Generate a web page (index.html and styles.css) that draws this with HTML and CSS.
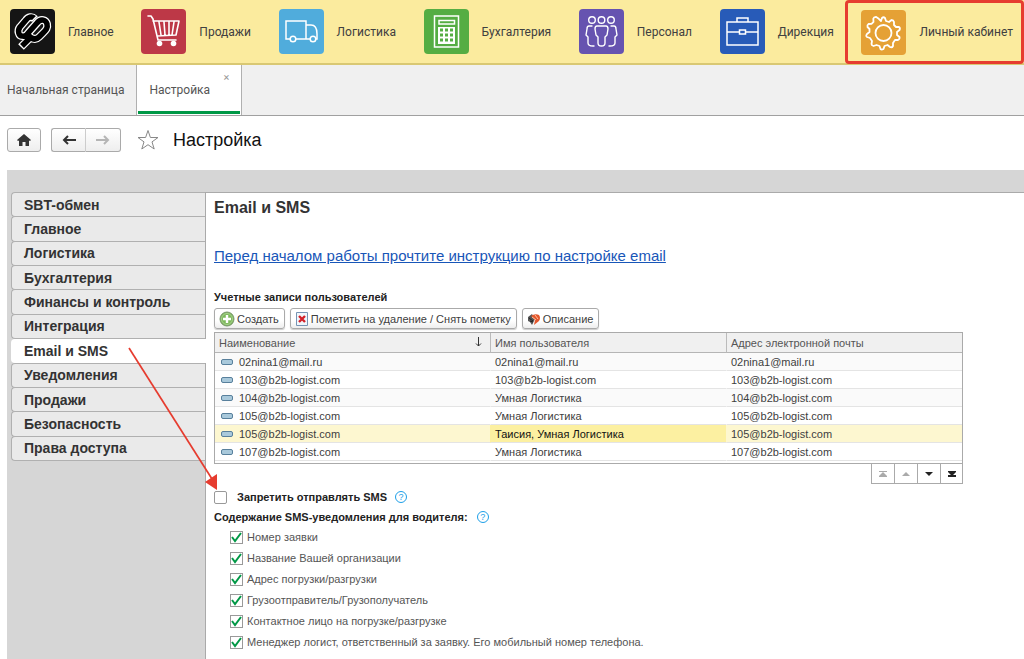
FILE: index.html
```html
<!DOCTYPE html>
<html lang="ru">
<head>
<meta charset="utf-8">
<title>Настройка</title>
<link rel="stylesheet" href="styles.css">
</head>
<body>
<nav class="sections" aria-label="Разделы">
  <a class="section" href="#main"><svg class="tile black" viewBox="0 0 45 45"><g fill="none" stroke-linejoin="round"><path stroke="#fff" stroke-width="8" d="M25 10C22 7 18 8 16 11L10 18C7 22 9 27 12 27C15 28 17 26 19 23L27 14C31 9 36 11 37 15C38 19 36 21 33 24L29 28C25 32 21 29 19 27M22 27L11 38"/><path stroke="#000" stroke-width="5.500" d="M24 9C22 7 18 8 16 11L10 18C7 22 9 27 12 27C15 28 17 26 19 23L27 14C31 9 36 11 37 15C38 19 36 21 33 24L29 28C25 32 21 29 19 27M22 27L12 37"/></g></svg>Главное</a>
  <a class="section" href="#sales"><svg class="tile red" viewBox="0 0 45 45"><g fill="none" stroke="#fff" stroke-width="1.600" stroke-linecap="round" stroke-linejoin="round"><path d="M7 7h3l2 3 5 21h18M12 12h26l-3 14-19 1M18 13l2 13M23 13l1 13M28 13v13M33 13l-2 13"/></g><g fill="#fff"><circle cx="18.500" cy="34.500" r="2.800"/><circle cx="32.500" cy="34.500" r="2.800"/></g></svg>Продажи</a>
  <a class="section" href="#logistics"><svg class="tile sky" viewBox="0 0 45 45"><g fill="none" stroke="#fff" stroke-width="1.500"><path d="M11 30H7V12h20v18H17M27 16h5c5 0 6 4 6 9v5h-1M31 30H17"/><circle cx="14" cy="30" r="2.800"/><circle cx="34" cy="30" r="2.800"/></g></svg>Логистика</a>
  <a class="section" href="#accounting"><svg class="tile green" viewBox="0 0 45 45"><path fill="none" stroke="#fff" stroke-width="1.500" d="M10.500 7h24v31h-24zM15 11.500h15.500v3.500H15z"/><path fill="#fff" d="M14 18h17v17H14z"/><path stroke="#55ad43" stroke-width="3" stroke-dasharray="3 2" d="M16 21h14M16 26h14M16 31h14"/></svg>Бухгалтерия</a>
  <a class="section" href="#staff"><svg class="tile violet" viewBox="0 0 45 45"><g fill="none" stroke="#fff" stroke-width="1.400" stroke-linejoin="round" stroke-linecap="round"><circle cx="13" cy="11" r="3.300"/><circle cx="22.500" cy="11" r="3.300"/><circle cx="32" cy="11" r="3.300"/><path d="M18 17h9q2 0 2 3l-1 6-2 2v6q0 3-3.500 3T19 34v-6l-2-2-1-6q0-3 2-3ZM13 17h-3q-2 0-2 3l-1 6 2 2v6q0 3 5 3h1M32 17h3q2 0 2 3l1 6-2 2v6q0 3-5 3h-1"/></g></svg>Персонал</a>
  <a class="section" href="#management"><svg class="tile blue" viewBox="0 0 45 45"><path fill="none" stroke="#fff" stroke-width="1.500" d="M7 13h31v23H7zM17 13V9h11v4M7 23h12M26 23h12M19.500 21h6v4h-6z"/></svg>Дирекция</a>
  <a class="section account" href="#account"><svg class="tile orange" viewBox="0 0 45 45"><g fill="none" stroke="#fff" stroke-width="1.800" stroke-linejoin="round"><circle cx="22.500" cy="23" r="8"/><path d="M20 11l1-3q1.500-1.500 3 0l1 3 3 1 2.500-2q2 0 2.500 2v3l2 2h3q1.500 1 .5 3l-2.500 2v3l2.500 2q.5 2-1.500 3h-3l-2 3v3q-1 2-3 1l-2.500-2-3 1-1 3q-2 1-3 0l-1-3-3-1-3 1q-2-.5-2-2l.5-3-2-3-3-1q-1.500-1 0-3l2.500-2v-3l-2-2q-.5-2 1-3l3-.2 2-2-.2-3q.5-2 2.500-2l3 2Z"/></g></svg>Личный кабинет</a>
</nav>
<div class="tabs">
  <a class="tab" href="#home">Начальная страница</a>
  <div class="tab current"><a href="#settings">Настройка</a><button class="close" aria-label="Закрыть">×</button></div>
</div>
<header class="toolbar">
  <button class="tool" aria-label="Домой"><svg width="14" height="12" viewBox="0 0 14 12"><path fill="#333" d="M7 0l7 6-1 1-1-.6V12H8.500V8h-3v4H2V6.400L1 7 0 6Z"/></svg></button>
  <div class="pair"><button class="tool" aria-label="Назад"><svg width="14" height="10" viewBox="0 0 14 10"><path fill="none" stroke="#333" stroke-width="2" d="M14 5H2M6 1L2 5l4 4"/></svg></button><button class="tool" aria-label="Вперед"><svg width="14" height="10" viewBox="0 0 14 10"><path fill="none" stroke="#b5b5b5" stroke-width="2" d="M0 5h12M8 1l4 4-4 4"/></svg></button></div>
  <button class="star" aria-label="В избранное"><svg width="22" height="22" viewBox="0 0 22 22"><path fill="#fff" stroke="#888" d="M11 1.500l2.400 7H21l-6 4.400 2.200 7.100L11 15.700 4.800 20 7 12.900 1 8.500h7.600Z"/></svg></button>
  <h1>Настройка</h1>
</header>
<div class="workspace">
  <nav class="side" aria-label="Настройки">
    <div class="side-list"><a href="#s1">SBT-обмен</a><a href="#s2">Главное</a><a href="#s3">Логистика</a><a href="#s4">Бухгалтерия</a><a href="#s5">Финансы и контроль</a><a href="#s6">Интеграция</a><a class="active" href="#s7">Email и SMS</a><a href="#s8">Уведомления</a><a href="#s9">Продажи</a><a href="#s10">Безопасность</a><a href="#s11">Права доступа</a></div>
  </nav>
  <main class="panel">
    <h2>Email и SMS</h2>
    <a class="guide" href="#guide">Перед началом работы прочтите инструкцию по настройке email</a>
    <h3>Учетные записи пользователей</h3>
    <div class="commands">
      <button><svg width="16" height="16" viewBox="0 0 16 16"><circle cx="8" cy="8" r="7" fill="#7db85c" stroke="#79966c"/><circle cx="8" cy="8" r="5.500" fill="none" stroke="#a8d28e"/><path stroke="#fff" stroke-width="2.400" d="M8 4v8M4 8h8"/></svg>Создать</button>
      <button><svg width="14" height="16" viewBox="0 0 14 16"><path fill="#f1f7fc" stroke="#7694b4" d="M1.500 1.500h11v13h-11z"/><path stroke="#d3222a" stroke-width="2.400" d="M4 5l6 6M10 5l-6 6"/></svg>Пометить на удаление / Снять пометку</button>
      <button><svg width="14" height="14" viewBox="0 0 14 14"><path fill="#555" d="M1 5l4-3 3 5-3 6-2-3-2-1Z"/><path fill="#e3562c" d="M4 4q4-3 8-1 2 3 0 6l-5 4 1-5Z"/><path stroke="#ffc29f" d="M5 5l4 3M8 3l3 4"/><path stroke="#222" d="M2 6l4 3M3 9l3 1"/></svg>Описание</button>
    </div>
    <table>
      <thead><tr><th class="name"><span>Наименование</span><svg width="7" height="10" viewBox="0 0 7 10"><path fill="none" stroke="#333" d="M3.500 0v9M1 6.500L3.500 9 6 6.500"/></svg></th><th>Имя пользователя</th><th>Адрес электронной почты</th></tr></thead>
      <tbody>
        <tr><td>02nina1@mail.ru</td><td>02nina1@mail.ru</td><td>02nina1@mail.ru</td></tr>
        <tr><td>103@b2b-logist.com</td><td>103@b2b-logist.com</td><td>103@b2b-logist.com</td></tr>
        <tr><td>104@b2b-logist.com</td><td>Умная Логистика</td><td>104@b2b-logist.com</td></tr>
        <tr><td>105@b2b-logist.com</td><td>Умная Логистика</td><td>105@b2b-logist.com</td></tr>
        <tr class="selected"><td>105@b2b-logist.com</td><td>Таисия, Умная Логистика</td><td>105@b2b-logist.com</td></tr>
        <tr><td>107@b2b-logist.com</td><td>Умная Логистика</td><td>107@b2b-logist.com</td></tr>
      </tbody>
    </table>
    <div class="pager">
      <button aria-label="В начало"><svg width="10" height="8" viewBox="0 0 10 8"><path fill="#aaa" d="M1 1h8v1H1zM5 2l4 4H1zM1 6h8v1H1z"/></svg></button><button aria-label="Вверх"><svg width="10" height="8" viewBox="0 0 10 8"><path fill="#aaa" d="M5 2l4 4H1z"/></svg></button><button aria-label="Вниз"><svg width="10" height="8" viewBox="0 0 10 8"><path fill="#222" d="M1 2h8L5 6z"/></svg></button><button aria-label="В конец"><svg width="10" height="8" viewBox="0 0 10 8"><path fill="#222" d="M1 1h8v1L6 5h3v2H1V5h3L1 2z"/></svg></button>
    </div>
    <div class="deny"><label><input type="checkbox">Запретить отправлять SMS</label><button class="help" aria-label="Справка">?</button></div>
    <div class="caption"><h3>Содержание SMS-уведомления для водителя:</h3><button class="help" aria-label="Справка">?</button></div>
    <div class="options">
      <label><input type="checkbox" checked>Номер заявки</label>
      <label><input type="checkbox" checked>Название Вашей организации</label>
      <label><input type="checkbox" checked>Адрес погрузки/разгрузки</label>
      <label><input type="checkbox" checked>Грузоотправитель/Грузополучатель</label>
      <label><input type="checkbox" checked>Контактное лицо на погрузке/разгрузке</label>
      <label><input type="checkbox" checked>Менеджер логист, ответственный за заявку. Его мобильный номер телефона.</label>
    </div>
  </main>
  <svg class="arrow" width="100" height="150" viewBox="0 0 100 150"><path stroke="#e63c2f" stroke-width="1.700" d="M3 3L86 134"/><path fill="#e63c2f" d="M91 145L79 137l12-8Z"/></svg>
</div>
</body>
</html>
```
FILE: styles.css
```css
* { box-sizing: border-box; }
body { margin: 0; min-height: 100vh; display: flex; flex-direction: column; background: #fff; color: #404040; font: 11px/14px "Liberation Sans", Arial, sans-serif; }
a { color: inherit; text-decoration: none; }
button { font: inherit; color: inherit; padding: 0; cursor: pointer; }
h1, h2, h3 { margin: 0; }
svg { display: block; flex: none; }
.sections { display: flex; justify-content: space-between; height: 65px; padding-left: 10px; background: #fbeb9e; border-bottom: 2px solid #d9c873; }
.section { display: flex; align-items: center; gap: 13px; font: 12px/16px Roboto, "Liberation Sans", sans-serif; white-space: nowrap; }
.tile { width: 45px; height: 45px; border-radius: 4px; }
.black { background: #151515; }
.red { background: #bd3847; }
.sky { background: #50acdc; }
.green { background: #55ad43; }
.violet { background: #6653b0; }
.blue { background: #285bb8; }
.orange { background: #e5a135; }
.account { height: 64px; margin-left: -16px; padding: 0 8px 0 13px; border: 3px solid #e63c2f; border-radius: 4px; }
.tabs { display: flex; height: 51px; background: #f0f0f0; border-bottom: 1px solid #a0a0a0; font: 12px/50px Roboto, "Liberation Sans", sans-serif; color: #555; }
.tab { padding: 0 12px 0 7px; }
.current { display: flex; width: 106px; padding: 0 12px 0 12px; justify-content: space-between; background: linear-gradient(#009846, #009846) center bottom 1px / 102px 3px no-repeat, #fff; border: solid #b0b0b0; border-width: 0 1px; }
.close { align-self: flex-start; margin-top: 7px; border: 0; background: none; color: #999; font-size: 11px; line-height: 12px; }
.toolbar { display: flex; align-items: center; height: 54px; padding: 0 7px 6px; }
.tool { display: grid; place-items: center; width: 34px; height: 24px; border: 1px solid #aaa; border-radius: 3px; background: linear-gradient(#fff, #eee); }
.pair { display: flex; margin: 0 16px 0 10px; }
.pair .tool { width: 35px; }
.pair .tool:first-child { border-radius: 3px 0 0 3px; border-right-color: #ccc; }
.pair .tool:last-child { border-left: 0; border-radius: 0 3px 3px 0; }
.star { border: 0; background: none; }
h1 { margin-left: 14px; font: 18px/24px "Liberation Sans", sans-serif; color: #111; }
.workspace { position: relative; display: flex; flex: 1; margin-left: 7px; padding: 22px 0 0 4px; background: #d6d6d6; }
.side { flex: none; width: 195px; border-right: 1px solid #aaa; color: #333; font: bold 14px/20px "Liberation Sans", sans-serif; }
.side-list { display: grid; grid-auto-rows: 1fr; height: 268px; }
.side a { display: flex; align-items: center; margin-bottom: -1px; padding-left: 12px; border: 1px solid #b0b0b0; border-right: 0; border-radius: 4px 0 0 4px; background: #eaeaea; }
.side .active { position: relative; margin: 1px -1px 0 0; background: #fff; border: 0; padding-left: 13px; }
.panel { flex: 1; min-width: 0; padding: 5px 61px 10px 8px; background: #fff; border-top: 1px solid #aaa; }
h2 { font: bold 16px/20px "Liberation Sans", sans-serif; color: #333; }
.guide { display: block; margin: 28px 0 24px; color: #1856b8; font-size: 15px; line-height: 20px; text-decoration: underline; }
h3 { font: bold 11px/14px "Liberation Sans", sans-serif; color: #222; }
.commands { display: flex; gap: 5px; margin: 4px 0 3px; }
.commands button { display: flex; align-items: center; gap: 2px; height: 21px; padding: 0 5px 0 4px; border: 1px solid #aaa; border-radius: 3px; background: linear-gradient(#fff 60%, #eee); box-shadow: 0 1px 1px #ccc; }
table { width: 100%; border: 1px solid #aaa; border-collapse: separate; border-spacing: 0; table-layout: fixed; padding-bottom: 2px; }
th { height: 20px; padding: 0 4px; background: #f0f0f0; border-bottom: 1px solid #b5b5b5; text-align: left; font-weight: normal; color: #555; }
th + th { border-left: 1px solid #bbb; }
th:last-child { width: 236px; }
th:nth-child(2) { width: 236px; }
.name span { display: inline-block; width: calc(100% - 11px); }
.name svg { display: inline-block; }
td { height: 18px; padding: 0 4px; border-bottom: 1px solid #e4e4e4; line-height: 16px; }
td + td { border-left: 1px solid transparent; }
tbody tr:nth-child(odd) { background: #fafafa; }
td:first-child::before { content: ""; display: inline-block; width: 10px; height: 4px; margin: 0 6px 1px 2px; border: 1px solid #58809c; border-radius: 2px; background: #a9c9db; }
tbody tr.selected:nth-child(n) { background: #fdf7d0; }
.selected td:nth-child(2) { background: #fcf0a1; color: #111; }
.pager { display: flex; justify-content: flex-end; }
.pager button { display: grid; place-items: center; width: 23px; height: 20px; border: 1px solid #aaa; border-width: 0 0 1px 1px; background: #fff; }
.pager button:last-child { border-right-width: 1px; }
.deny { display: flex; gap: 8px; align-items: center; margin-top: 6px; color: #222; font-weight: bold; }
.deny label { display: flex; align-items: center; gap: 10px; }
input { appearance: none; width: 13px; height: 13px; margin: 0; border: 1px solid #999; border-radius: 2px; background: #fff; flex: none; }
.help { width: 12px; height: 12px; border: 1px solid #1d9fe8; border-radius: 50%; background: #fff; color: #1d9fe8; font: 9px/10px "Liberation Sans", sans-serif; }
.caption { display: flex; align-items: center; gap: 9px; margin-top: 6px; }
.options { display: flex; flex-direction: column; gap: 7px; margin: 6px 0 0 16px; color: #555; }
.options label { display: flex; align-items: center; gap: 4px; }
input:checked { border-radius: 0; background: url("data:image/svg+xml,%3Csvg xmlns='http://www.w3.org/2000/svg' viewBox='0 0 11 11'%3E%3Cpath d='M1 5l3 4L10 1' fill='none' stroke='%23009846' stroke-width='2'/%3E%3C/svg%3E"); }
.arrow { position: absolute; left: 119px; top: 175px; pointer-events: none; }
```
